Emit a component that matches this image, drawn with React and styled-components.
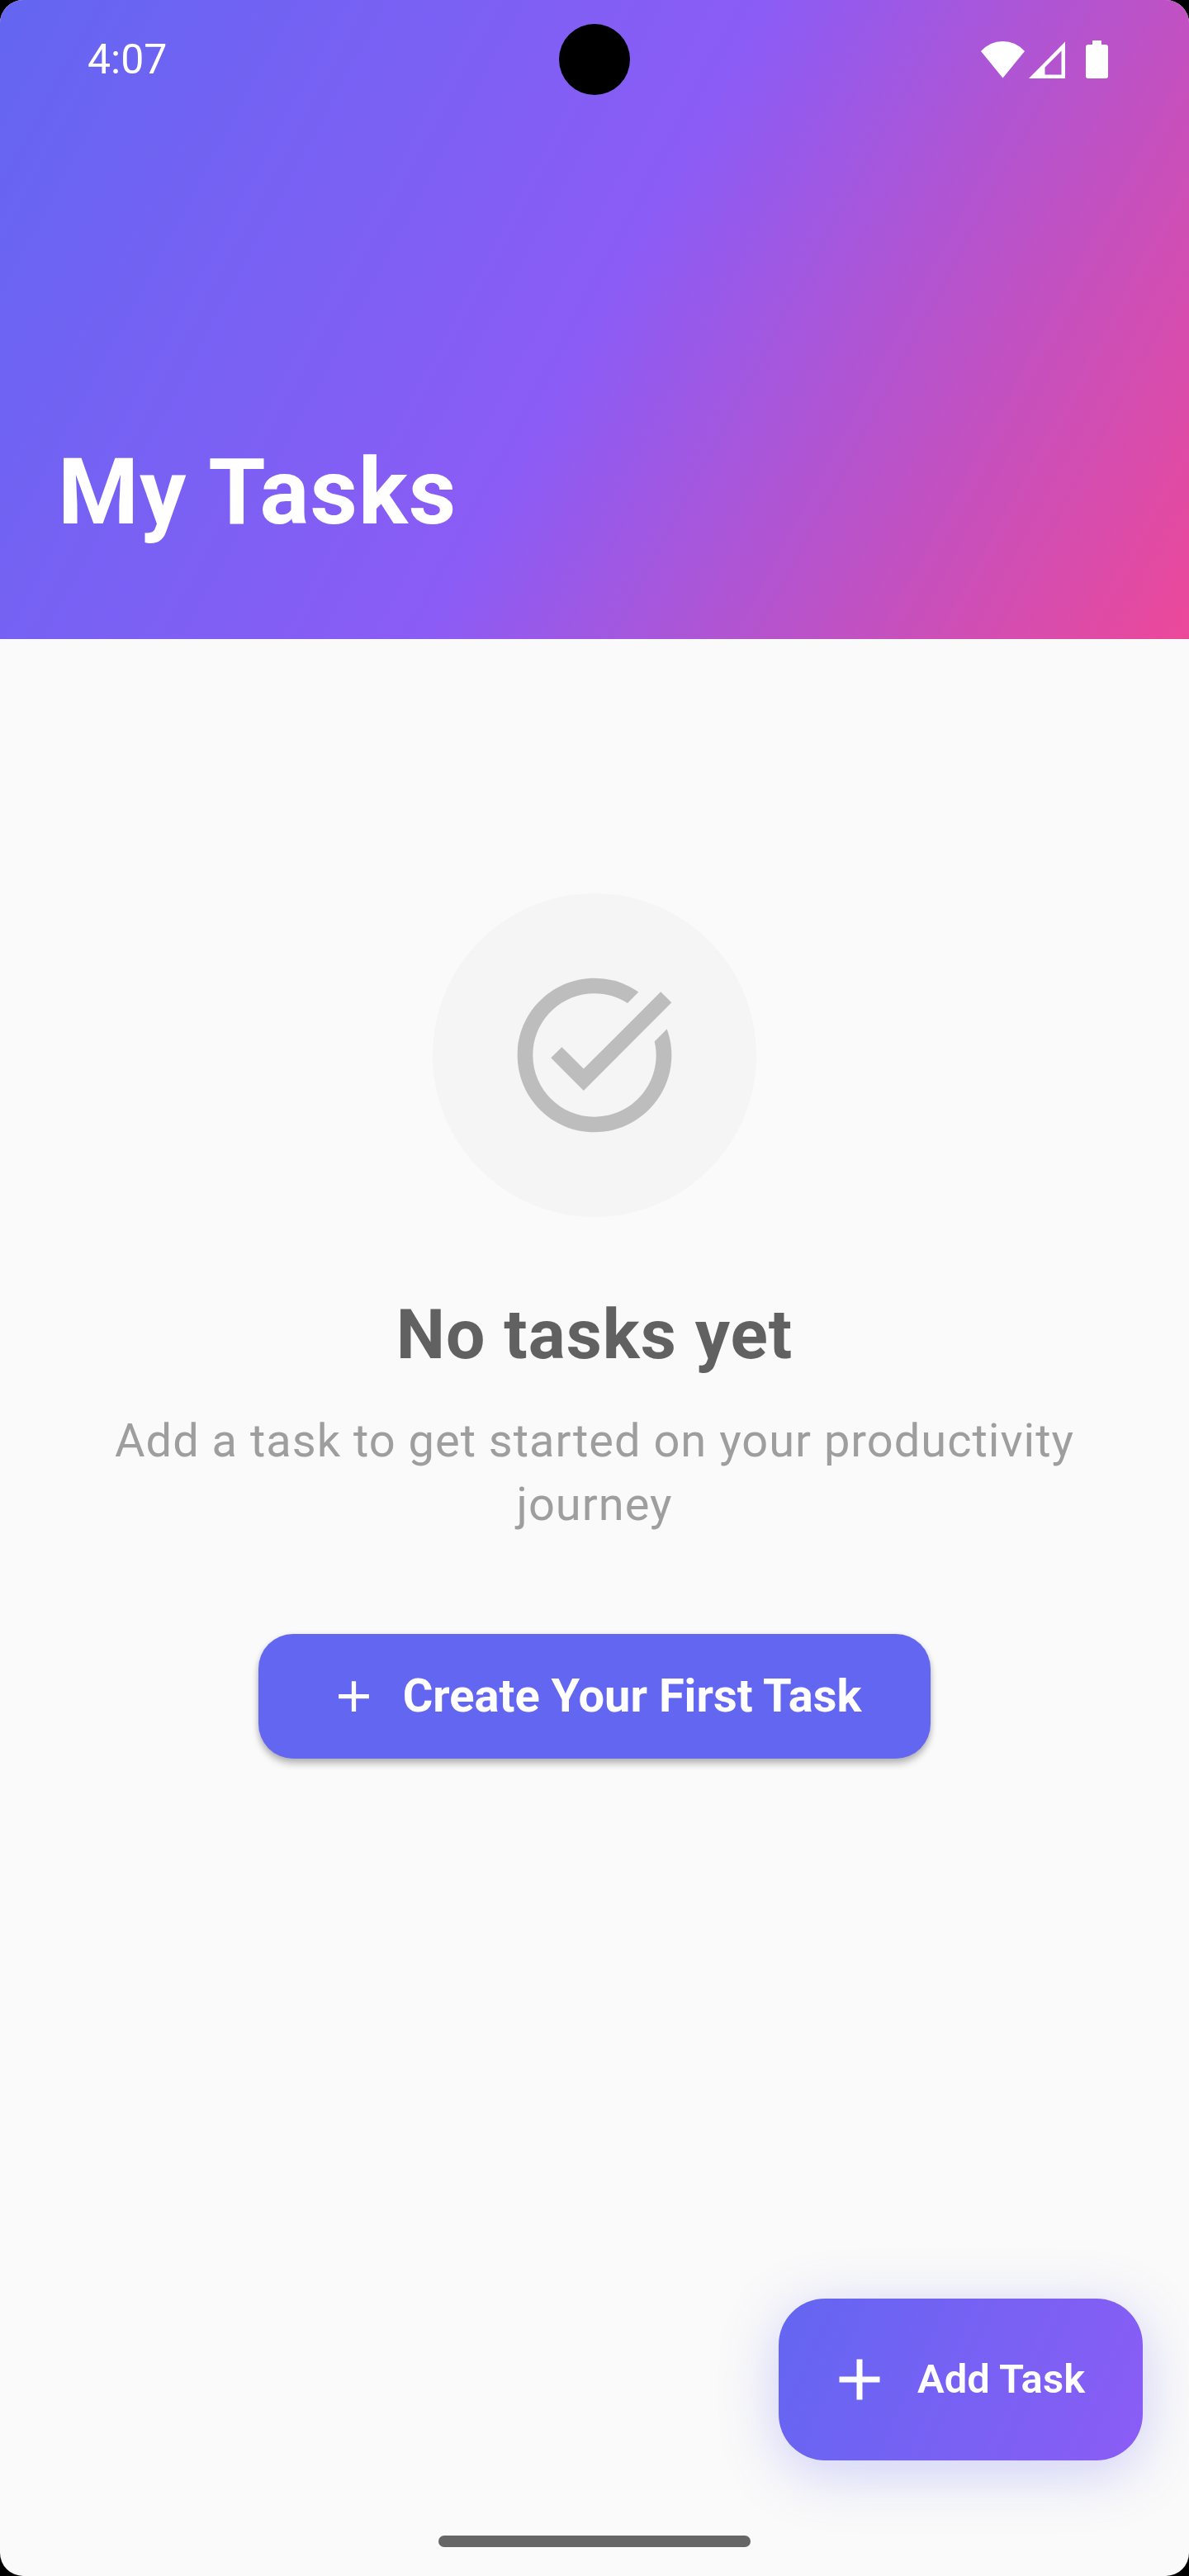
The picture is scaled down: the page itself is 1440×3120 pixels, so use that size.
import React from "react";
import styled, { createGlobalStyle } from "styled-components";
import { MdTaskAlt, MdAdd } from "react-icons/md";

const GlobalStyle = createGlobalStyle`
  *, *::before, *::after { box-sizing: border-box; }
  html { background: #000; }
  body {
    margin: 0;
    background: #000;
    font-family: Roboto, "Noto Sans", sans-serif;
  }
  h1, h2, p { margin: 0; }
`;

const Screen = styled.div`
  display: flex;
  flex-direction: column;
  min-height: 100vh;
  overflow: hidden;
  border-radius: 28px;
  background: #fafafa;
`;

const Header = styled.header`
  display: flex;
  flex-direction: column;
  gap: 386px;
  padding-bottom: 112px;
  color: #fff;
  background: linear-gradient(118.26deg, #6366f1 0%, #8b5cf6 50%, #ec4899 100%);
`;

const StatusBar = styled.div`
  display: grid;
  grid-template-columns: 1fr auto 1fr;
  align-items: center;
  height: 144px;
`;

const Time = styled.time`
  padding-left: 106px;
  font-size: 50px;
  line-height: 60px;
`;

const Camera = styled.span`
  width: 86px;
  height: 86px;
  border-radius: 50%;
  background: #000;
`;

const StatusIcons = styled.div`
  display: flex;
  justify-content: flex-end;
  align-items: center;
  gap: 5px;
  padding-right: 98px;
`;

const StatusGlyph = styled.svg`
  display: block;
  width: ${(p) => p.$width}px;
  height: 46px;
  margin-left: ${(p) => p.$space || 0}px;
  fill: currentColor;
`;

const Title = styled.h1`
  padding: 0 70px;
  font-size: 112px;
  font-weight: 700;
  letter-spacing: 1px;
  line-height: 132px;
`;

const EmptyState = styled.main`
  display: flex;
  flex: 1;
  flex-direction: column;
  align-items: center;
  padding: 308px 112px 84px;
  text-align: center;
`;

const Badge = styled.div`
  display: grid;
  place-items: center;
  width: 392px;
  height: 392px;
  border-radius: 50%;
  color: #bdbdbd;
  background: #f5f5f5;
`;

const Heading = styled.h2`
  margin-top: 87px;
  color: #616161;
  font-size: 84px;
  font-weight: 700;
  letter-spacing: 1px;
  line-height: 112px;
`;

const Description = styled.p`
  margin-top: 34px;
  color: #9e9e9e;
  font-size: 56px;
  letter-spacing: 1px;
  line-height: 77px;
`;

const Button = styled.button`
  display: inline-flex;
  align-items: center;
  gap: 28px;
  border: 0;
  color: #fff;
  font-family: inherit;
  cursor: pointer;
`;

const CreateButton = styled(Button)`
  margin-top: 118px;
  padding: 42px 84px;
  border-radius: 42px;
  background: #6366f1;
  box-shadow: 0 7px 9px rgba(0, 0, 0, 0.2), 0 2px 7px rgba(0, 0, 0, 0.14);
  font-size: 56px;
  font-weight: 700;
  line-height: 67px;
`;

const Footer = styled.footer`
  display: flex;
  flex-direction: column;
  align-items: center;
  gap: 91px;
  padding: 0 56px 35px;
`;

const AddButton = styled(Button)`
  align-self: flex-end;
  padding: 56px 70px 56px 56px;
  border-radius: 56px;
  background: linear-gradient(113.8deg, #6366f1, #8b5cf6);
  box-shadow: 0 14px 70px rgba(99, 102, 241, 0.3);
  font-size: 49px;
  font-weight: 600;
  line-height: 84px;
`;

const HomeIndicator = styled.div`
  width: 378px;
  height: 14px;
  border-radius: 7px;
  background: #666;
`;

export default function App() {
  return (
    <>
      <GlobalStyle />
      <Screen>
        <Header>
          <StatusBar>
            <Time>4:07</Time>
            <Camera />
            <StatusIcons>
              <StatusGlyph $width={53} viewBox="0 0 53 46" aria-label="Wi-Fi">
                <path d="M26.5 45.5 0 13Q11 1 26.5 1T53 13Z" />
              </StatusGlyph>
              <StatusGlyph $width={44} viewBox="0 0 44 46" aria-label="Mobile signal">
                <path fillRule="evenodd" d="M44 1.5V46H0ZM39.5 12.5 19.5 32.5V41.5H39.5Z" />
              </StatusGlyph>
              <StatusGlyph $width={27} $space={20} viewBox="0 0 27 46" aria-label="Battery">
                <path d="M8 0H19V5H24Q27 5 27 8V43Q27 46 24 46H3Q0 46 0 43V8Q0 5 3 5H8Z" />
              </StatusGlyph>
            </StatusIcons>
          </StatusBar>
          <Title>My Tasks</Title>
        </Header>

        <EmptyState>
          <Badge>
            <MdTaskAlt size={224} aria-hidden="true" />
          </Badge>
          <Heading>No tasks yet</Heading>
          <Description>Add a task to get started on your productivity journey</Description>
          <CreateButton type="button">
            <MdAdd size={63} aria-hidden="true" />
            Create Your First Task
          </CreateButton>
        </EmptyState>

        <Footer>
          <AddButton type="button">
            <MdAdd size={84} aria-hidden="true" />
            Add Task
          </AddButton>
          <HomeIndicator />
        </Footer>
      </Screen>
    </>
  );
}
